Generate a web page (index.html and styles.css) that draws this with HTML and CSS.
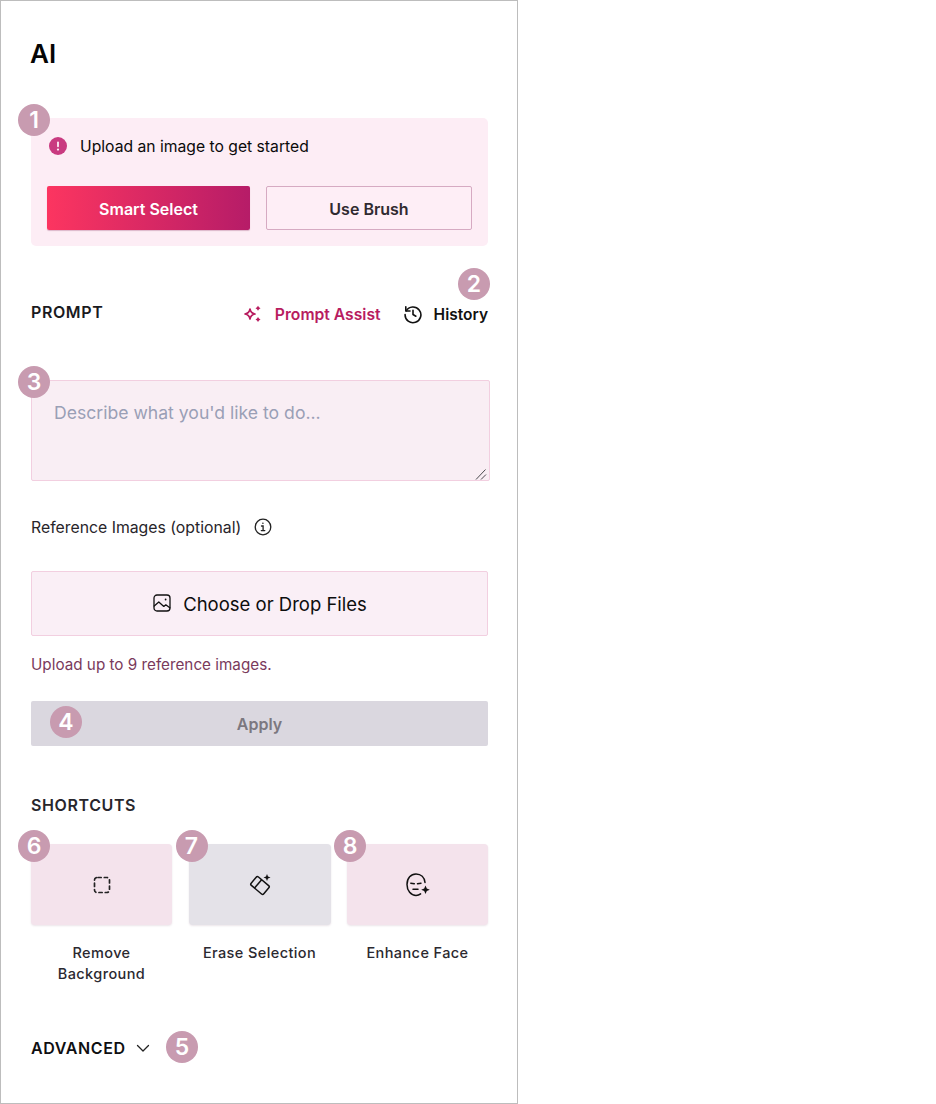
FILE: index.html
```html
<!DOCTYPE html>
<html lang="en">
<head>
<meta charset="utf-8">
<title>AI</title>
<link rel="stylesheet" href="styles.css">
</head>
<body>
<aside class="panel">
  <h1 class="title">AI</h1>

  <section class="notice">
    <span class="badge badge-notice">1</span>
    <div class="notice-msg">
      <svg class="notice-icon" viewBox="0 0 18 18"><circle cx="9" cy="9" r="9" fill="#c93a80"/><rect x="8.100" y="4.400" width="1.800" height="5.800" rx=".9" fill="#fdedf5"/><circle cx="9" cy="12.600" r="1.100" fill="#fdedf5"/></svg>
      <span>Upload an image to get started</span>
    </div>
    <div class="notice-actions">
      <button class="btn btn-primary">Smart Select</button>
      <button class="btn btn-outline">Use Brush</button>
    </div>
  </section>

  <header class="prompt-head">
    <h2 class="section-label">PROMPT</h2>
    <div class="prompt-tools">
      <span class="tool tool-assist">
        <svg class="tool-icon" viewBox="0 0 20 20" fill="none" stroke="#b81c5f" stroke-width="1.700" stroke-linejoin="round"><path d="M7 5c.5 3 1.600 4.400 5 5-3.400.6-4.500 2-5 5-.5-3-1.600-4.400-5-5 3.400-.6 4.500-2 5-5z"/><path d="M15 1.800l1 1.500 1.500 1-1.500 1-1 1.500-1-1.500-1.500-1 1.500-1z" fill="#b81c5f" stroke="none"/><path d="M15 13l1 1.500 1.500 1-1.500 1-1 1.500-1-1.500-1.500-1 1.500-1z" fill="#b81c5f" stroke="none"/></svg>
        <span>Prompt Assist</span>
      </span>
      <span class="tool tool-history">
        <svg class="tool-icon" viewBox="0 0 20 20" fill="none" stroke="#111" stroke-width="1.600" stroke-linecap="round" stroke-linejoin="round"><path d="M3.200 6.800A7.900 7.900 0 1 1 2.100 10.500"/><path d="M2.800 2.800v4.200h4.200"/><path d="M10 6.200v4.300l2.900 1.700"/></svg>
        <span>History</span>
      </span>
      <span class="badge badge-history">2</span>
    </div>
  </header>

  <div class="prompt-wrap">
    <span class="badge badge-prompt">3</span>
    <textarea class="prompt-input" placeholder="Describe what you'd like to do..."></textarea>
    <svg class="resize-grip" viewBox="0 0 12 12" fill="none" stroke="#4a4a4e" stroke-width="1"><path d="M1 11.500L10.500 1.500M6 11.500l5-5"/></svg>
  </div>

  <div class="ref-label">
    <span>Reference Images (optional)</span>
    <svg class="info-icon" viewBox="0 0 18 18" fill="none" stroke="#222" stroke-width="1.300" stroke-linecap="round"><circle cx="9" cy="9" r="7.800"/><path d="M7.500 8h1.600v4.600M7.300 12.600h3.500"/><circle cx="8.900" cy="5.300" r=".8" fill="#222" stroke="none"/></svg>
  </div>

  <div class="dropzone">
    <svg class="drop-icon" viewBox="0 0 18 18" fill="none" stroke="#111" stroke-width="1.300" stroke-linecap="round" stroke-linejoin="round"><rect x="1" y="1" width="16" height="16" rx="3"/><path d="M1.200 12l4.600-4 5 4.400 2-1.600 4 3"/><circle cx="12.600" cy="5.500" r=".9" fill="#111" stroke="none"/></svg>
    <span>Choose or Drop Files</span>
  </div>

  <p class="hint">Upload up to 9 reference images.</p>

  <div class="apply-wrap">
    <span class="badge badge-apply">4</span>
    <button class="btn-apply">Apply</button>
  </div>

  <h2 class="section-label shortcuts-label">SHORTCUTS</h2>

  <div class="shortcuts">
    <div class="shortcut">
      <span class="badge badge-card">6</span>
      <div class="shortcut-card">
        <svg class="shortcut-icon" viewBox="0 0 18 18" fill="none" stroke="#222" stroke-width="1.700" stroke-linecap="round"><rect x="1.500" y="1.500" width="15" height="15" rx="2.500" stroke-dasharray="3.200 3.100" stroke-dashoffset="-1"/></svg>
      </div>
      <span class="shortcut-name">Remove Background</span>
    </div>
    <div class="shortcut">
      <span class="badge badge-card">7</span>
      <div class="shortcut-card shortcut-card-grey">
        <svg class="shortcut-icon shortcut-icon-lg" viewBox="0 0 24 24" fill="none" stroke="#111" stroke-width="1.500" stroke-linejoin="round"><g transform="rotate(40 12 12.500)"><rect x="3.750" y="7" width="16.500" height="11" rx="1.600"/><path d="M9.500 7v11"/></g><path d="M19 1l1 2.500 2.500 1-2.500 1-1 2.500-1-2.500-2.500-1 2.500-1z" fill="#111" stroke="none"/></svg>
      </div>
      <span class="shortcut-name">Erase Selection</span>
    </div>
    <div class="shortcut">
      <span class="badge badge-card">8</span>
      <div class="shortcut-card">
        <svg class="shortcut-icon shortcut-icon-lg" viewBox="0 0 24 24" fill="none" stroke="#111" stroke-width="1.500" stroke-linecap="round" stroke-linejoin="round"><path d="M19 9.500C18.500 4.500 15 1 10 1 5 1 1 5 1 11.500c0 6.200 4 11 9 11 1.800 0 3.400-.6 4.600-1.600"/><path d="M4.800 10.200l3.500.5M11.500 10.700l3.500-.5M7 16.200h5"/><path d="M19.500 12.500l1.300 3 3 1.300-3 1.300-1.300 3-1.300-3-3-1.300 3-1.300z" fill="#111" stroke="none"/></svg>
      </div>
      <span class="shortcut-name">Enhance Face</span>
    </div>
  </div>

  <div class="advanced">
    <span>ADVANCED</span>
    <svg class="chevron" viewBox="0 0 14 14" fill="none" stroke="#222" stroke-width="1.300" stroke-linecap="round" stroke-linejoin="round"><path d="M1.500 4.500L7 10l5.500-5.500"/></svg>
    <span class="badge badge-advanced">5</span>
  </div>
</aside>
</body>
</html>
```
FILE: styles.css
```css
* { box-sizing: border-box; }
html, body { margin: 0; padding: 0; background: #fff; }
body { font-family: Inter, "Liberation Sans", sans-serif; color: #111; }

.panel {
  width: 518px;
  height: 1104px;
  border: 1px solid #bdbdbd;
  padding: 0 29px 0 30px;
  display: flex;
  flex-direction: column;
}

.title {
  margin: 37px 0 0 -1px;
  font-size: 26px;
  line-height: 31px;
  font-weight: 600;
  color: #050505;
}

.badge {
  position: absolute;
  width: 32px;
  height: 32px;
  border-radius: 50%;
  background: #c89bb0;
  color: #fff;
  font-size: 23px;
  font-weight: 600;
  line-height: 32px;
  letter-spacing: 0;
  text-align: center;
}

.notice {
  position: relative;
  margin-top: 49px;
  height: 128px;
  background: #fdedf5;
  border-radius: 5px;
  padding: 16px 16px 0;
}
.badge-notice { left: -13px; top: -14px; }
.notice-msg {
  display: flex;
  align-items: center;
  gap: 13px;
  height: 24px;
  padding-left: 2px;
  font-size: 15.700px;
  color: #0a0a0a;
}
.notice-icon { width: 18px; height: 18px; }
.notice-actions {
  margin-top: 28px;
  display: grid;
  grid-template-columns: 203px 206px;
  gap: 16px;
}
.btn {
  height: 44px;
  border-radius: 2px;
  font-family: inherit;
  font-size: 16px;
  font-weight: 600;
  padding: 1px 0 0;
}
.btn-primary {
  border: 0;
  color: #fff;
  background: linear-gradient(90deg, #fc3560 0%, #b61c68 100%);
  box-shadow: 0 1px 1px rgba(120, 20, 70, .25);
}
.btn-outline {
  border: 1px solid #d6aac2;
  background: #feeef6;
  color: #302a30;
}

.prompt-head {
  margin-top: 53px;
  height: 26px;
  display: flex;
  align-items: center;
  justify-content: space-between;
}
.section-label {
  margin: 0;
  font-size: 16px;
  font-weight: 600;
  letter-spacing: .6px;
  color: #1a1a1e;
}
.prompt-tools {
  position: relative;
  display: flex;
  align-items: center;
  gap: 22px;
  margin-top: 5px;
}
.tool {
  display: flex;
  align-items: center;
  font-weight: 600;
}
.tool-assist { gap: 12px; font-size: 15.700px; color: #b81c5f; }
.tool-history { gap: 11px; font-size: 15.500px; color: #111; }
.tool-icon { width: 20px; height: 20px; margin-top: -2px; }
.badge-history { right: -2px; top: -37px; }

.prompt-wrap { position: relative; margin-top: 55px; height: 101px; }
.badge-prompt { left: -13px; top: -14px; z-index: 1; }
.prompt-input {
  display: block;
  width: 459px;
  height: 101px;
  border: 1px solid #f2cfe0;
  border-radius: 2px;
  background: #f9eef4;
  padding: 21px 22px;
  font-family: inherit;
  font-size: 17.600px;
  line-height: 22px;
  color: #111;
  outline: 0;
  resize: none;
}
.prompt-input::placeholder { color: #9a9fb6; opacity: 1; }
.resize-grip {
  position: absolute;
  right: 1px;
  bottom: 1px;
  width: 12px;
  height: 12px;
}

.ref-label {
  margin-top: 36px;
  height: 20px;
  display: flex;
  align-items: center;
  gap: 13px;
  font-size: 15.800px;
  color: #28252a;
}
.info-icon { width: 18px; height: 18px; margin-top: -1px; }

.dropzone {
  margin-top: 34px;
  height: 65px;
  border: 1px solid #f2cfe0;
  border-radius: 2px;
  background: #faeff6;
  display: flex;
  align-items: center;
  justify-content: center;
  gap: 12px;
  font-size: 18.500px;
  font-weight: 400;
  color: #0d0d0d;
}
.drop-icon { width: 18px; height: 18px; margin-top: -2px; margin-left: 1px; }

.hint {
  margin: 19px 0 0;
  height: 20px;
  font-size: 15.250px;
  line-height: 20px;
  color: #7a3a5c;
}

.apply-wrap { position: relative; margin-top: 26px; }
.badge-apply { left: 19px; top: 5px; }
.btn-apply {
  display: block;
  width: 100%;
  height: 45px;
  border: 0;
  border-radius: 2px;
  background: #dad7df;
  color: #7c7880;
  font-family: inherit;
  font-size: 16px;
  font-weight: 600;
  padding: 0;
}

.shortcuts-label { margin-top: 49px; line-height: 20px; color: #28262c; }

.shortcuts {
  margin-top: 29px;
  display: grid;
  grid-template-columns: 141px 142px 141px;
  column-gap: 16.500px;
}
.shortcut {
  position: relative;
  display: flex;
  flex-direction: column;
  align-items: center;
}
.badge-card { left: -13px; top: -14px; }
.shortcut-card {
  width: 100%;
  height: 81px;
  background: #f4e3ec;
  border-radius: 4px;
  box-shadow: 0 1px 2px rgba(90, 40, 70, .12);
  display: flex;
  align-items: center;
  justify-content: center;
}
.shortcut-card-grey { background: #e4e2e8; }
.shortcut-icon { width: 18px; height: 18px; }
.shortcut-icon-lg { width: 24px; height: 24px; }
.shortcut-name {
  margin-top: 18px;
  width: 120px;
  height: 41px;
  text-align: center;
  font-size: 14.500px;
  font-weight: 500;
  line-height: 20.500px;
  letter-spacing: .4px;
  color: #2b2930;
}

.advanced {
  position: relative;
  margin-top: 54px;
  display: flex;
  align-items: center;
  gap: 10px;
  height: 20px;
  font-size: 16px;
  font-weight: 600;
  letter-spacing: .6px;
  color: #0f0f12;
}
.chevron { width: 14px; height: 14px; }
.badge-advanced { left: 135px; top: -7px; }
```
